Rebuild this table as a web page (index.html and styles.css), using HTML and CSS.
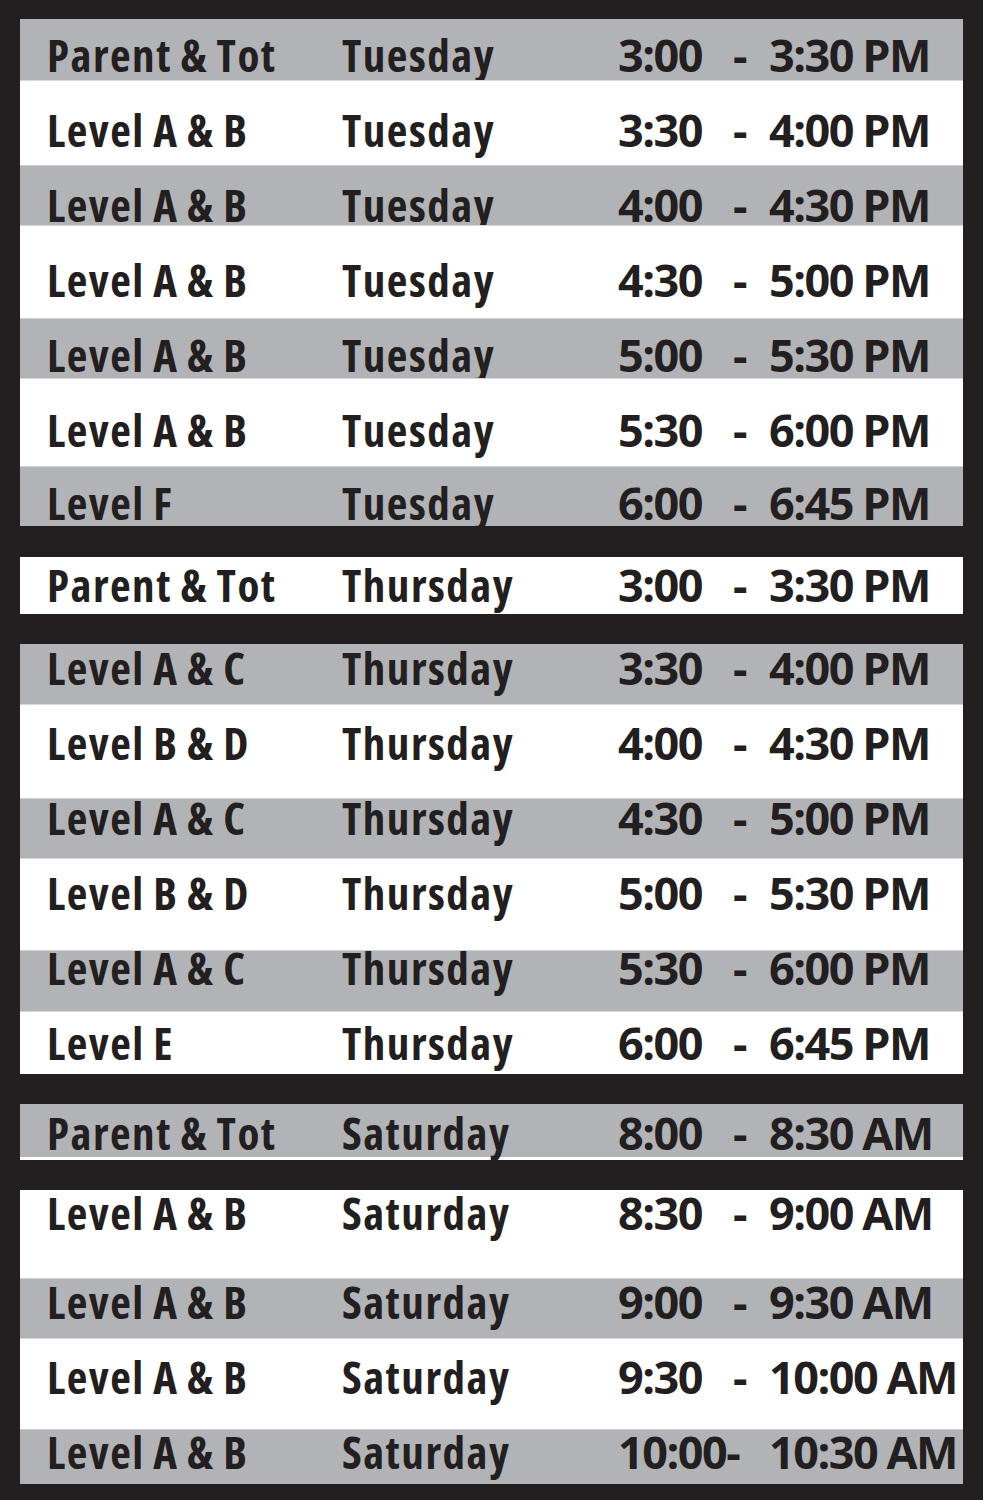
FILE: index.html
```html
<!DOCTYPE html>
<html lang="en">
<head>
<meta charset="utf-8">
<title>Class Schedule</title>
<link rel="stylesheet" href="styles.css">
</head>
<body>
<main class="board">
  <section class="group">
    <div class="row g r1"><span class="c1">Parent &amp; Tot</span><span class="c2">Tuesday</span><span class="c3"><span class="t1">3:00</span><span class="dash">-</span><span class="t2">3:30 PM</span></span></div>
    <div class="row w r2"><span class="c1">Level A &amp; B</span><span class="c2">Tuesday</span><span class="c3"><span class="t1">3:30</span><span class="dash">-</span><span class="t2">4:00 PM</span></span></div>
    <div class="row g r3"><span class="c1">Level A &amp; B</span><span class="c2">Tuesday</span><span class="c3"><span class="t1">4:00</span><span class="dash">-</span><span class="t2">4:30 PM</span></span></div>
    <div class="row w r4"><span class="c1">Level A &amp; B</span><span class="c2">Tuesday</span><span class="c3"><span class="t1">4:30</span><span class="dash">-</span><span class="t2">5:00 PM</span></span></div>
    <div class="row g r5"><span class="c1">Level A &amp; B</span><span class="c2">Tuesday</span><span class="c3"><span class="t1">5:00</span><span class="dash">-</span><span class="t2">5:30 PM</span></span></div>
    <div class="row w r6"><span class="c1">Level A &amp; B</span><span class="c2">Tuesday</span><span class="c3"><span class="t1">5:30</span><span class="dash">-</span><span class="t2">6:00 PM</span></span></div>
    <div class="row g r7"><span class="c1">Level F</span><span class="c2">Tuesday</span><span class="c3"><span class="t1">6:00</span><span class="dash">-</span><span class="t2">6:45 PM</span></span></div>
  </section>
  <section class="group">
    <div class="row w r8"><span class="c1">Parent &amp; Tot</span><span class="c2">Thursday</span><span class="c3"><span class="t1">3:00</span><span class="dash">-</span><span class="t2">3:30 PM</span></span></div>
  </section>
  <section class="group">
    <div class="row g r9"><span class="c1">Level A &amp; C</span><span class="c2">Thursday</span><span class="c3"><span class="t1">3:30</span><span class="dash">-</span><span class="t2">4:00 PM</span></span></div>
    <div class="row w r10"><span class="c1">Level B &amp; D</span><span class="c2">Thursday</span><span class="c3"><span class="t1">4:00</span><span class="dash">-</span><span class="t2">4:30 PM</span></span></div>
    <div class="row g r11"><span class="c1">Level A &amp; C</span><span class="c2">Thursday</span><span class="c3"><span class="t1">4:30</span><span class="dash">-</span><span class="t2">5:00 PM</span></span></div>
    <div class="row w r12"><span class="c1">Level B &amp; D</span><span class="c2">Thursday</span><span class="c3"><span class="t1">5:00</span><span class="dash">-</span><span class="t2">5:30 PM</span></span></div>
    <div class="row g r13"><span class="c1">Level A &amp; C</span><span class="c2">Thursday</span><span class="c3"><span class="t1">5:30</span><span class="dash">-</span><span class="t2">6:00 PM</span></span></div>
    <div class="row w r14"><span class="c1">Level E</span><span class="c2">Thursday</span><span class="c3"><span class="t1">6:00</span><span class="dash">-</span><span class="t2">6:45 PM</span></span></div>
  </section>
  <section class="group">
    <div class="row g r15"><span class="c1">Parent &amp; Tot</span><span class="c2">Saturday</span><span class="c3"><span class="t1">8:00</span><span class="dash">-</span><span class="t2">8:30 AM</span></span></div>
  </section>
  <section class="group">
    <div class="row w r16"><span class="c1">Level A &amp; B</span><span class="c2">Saturday</span><span class="c3"><span class="t1">8:30</span><span class="dash">-</span><span class="t2">9:00 AM</span></span></div>
    <div class="row g r17"><span class="c1">Level A &amp; B</span><span class="c2">Saturday</span><span class="c3"><span class="t1">9:00</span><span class="dash">-</span><span class="t2">9:30 AM</span></span></div>
    <div class="row w r18"><span class="c1">Level A &amp; B</span><span class="c2">Saturday</span><span class="c3"><span class="t1">9:30</span><span class="dash">-</span><span class="t2">10:00 AM</span></span></div>
    <div class="row g r19"><span class="c1">Level A &amp; B</span><span class="c2">Saturday</span><span class="c3"><span class="t1">10:00-</span><span class="dash"></span><span class="t2">10:30 AM</span></span></div>
  </section>
</main>
</body>
</html>
```
FILE: styles.css
```css
html, body {
  margin: 0;
  padding: 0;
  background: #231f20;
}
.board {
  width: 943px;
  margin: 0 20px;
  padding: 19px 0 16px;
  display: flex;
  flex-direction: column;
  gap: 30px;
  font-family: "Open Sans", "DejaVu Sans", sans-serif;
  font-weight: 700;
  font-size: 45px;
  line-height: 36px;
  color: #231f20;
}
.group {
  display: flex;
  flex-direction: column;
}
.group:nth-child(2) { margin-top: 1px; }
.row {
  box-sizing: border-box;
  display: grid;
  grid-template-columns: 295px 276px 1fr;
  align-items: start;
  padding-left: 27px;
  white-space: nowrap;
}
.g { background: #b1b3b6; }
.w { background: #ffffff; }
.w + .g, .g + .w { box-shadow: inset 0 1px 0 rgba(210, 211, 213, 0.9); }
.c1, .c2 {
  font-stretch: 75%;
  letter-spacing: 1.5px;
  word-spacing: -1px;
}
.c3 {
  display: flex;
  font-stretch: 100%;
  letter-spacing: -1.5px;
  word-spacing: -1px;
}
.t1 { width: 115px; }
.dash { width: 36px; }

.r1  { height: 61px; padding-top: 18px; }
.r2  { height: 85px; padding-top: 32px; }
.r3  { height: 60px; padding-top: 22px; }
.r4  { height: 93px; padding-top: 37px; }
.r5  { height: 60px; padding-top: 19px; }
.r6  { height: 88px; padding-top: 34px; }
.r7  { height: 60px; padding-top: 19px; }
.r8  { height: 57px; padding-top: 10px; }
.r9  { height: 60px; padding-top: 6px; }
.r10 { height: 94px; padding-top: 21px; }
.r11 { height: 60px; padding-top: 2px; }
.r12 { height: 92px; padding-top: 17px; }
.r13 { height: 61px; padding-top: 0px; }
.r14 { height: 63px; padding-top: 14px; }
.r15 { height: 56px; padding-top: 11px; border-bottom: 3px solid #ffffff; }
.r16 { height: 88px; padding-top: 5px; }
.r17 { height: 60px; padding-top: 6px; }
.r18 { height: 91px; padding-top: 21px; }
.r19 { height: 55px; padding-top: 5px; }
```
